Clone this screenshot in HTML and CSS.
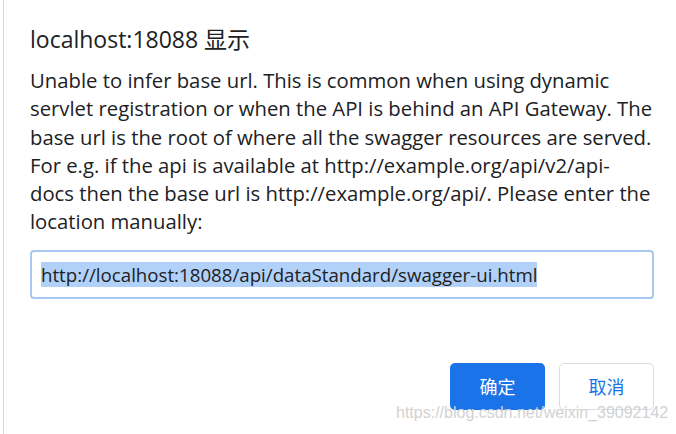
FILE: index.html
```html
<!DOCTYPE html>
<html>
<head>
<meta charset="utf-8">
<link rel="stylesheet" href="styles.css">
</head>
<body>
<div class="frame">
  <div class="dialog">
    <h1 class="title">localhost:18088 显示</h1>
    <p class="message">Unable to infer base url. This is common when using dynamic servlet registration or when the API is behind an API Gateway. The base url is the root of where all the swagger resources are served. For e.g. if the api is available at http://example.org/api/v2/api-<br>docs then the base url is http://example.org/api/. Please enter the location manually:</p>
    <div class="input"><span class="sel">http://localhost:18088/api/dataStandard/swagger-ui.html</span></div>
    <div class="actions">
      <button class="btn primary">确定</button>
      <button class="btn secondary">取消</button>
    </div>
  </div>
  <div class="watermark">https://blog.csdn.net/weixin_39092142</div>
</div>
</body>
</html>
```
FILE: styles.css
```css
html, body {
  margin: 0;
  padding: 0;
  background: #fff;
}
.frame {
  position: relative;
  width: 673px;
  height: 434px;
  box-sizing: border-box;
  margin-left: 3px;
  border-left: 1px solid #d8d8d8;
  overflow: hidden;
}
.dialog {
  padding: 23px 0 0 26px;
  font-family: "Open Sans", "Noto Sans CJK SC", sans-serif;
  color: #202124;
}
.title {
  margin: 0;
  font-size: 23px;
  font-weight: 400;
  line-height: 32px;
}
.message {
  margin: 11px 0 0 0;
  font-size: 20.3px;
  line-height: 28.3px;
  width: 628px;
}
.input {
  margin-top: 14px;
  width: 624px;
  height: 49px;
  box-sizing: border-box;
  border: 2px solid #a8c7f1;
  border-radius: 4px;
  display: flex;
  align-items: center;
  padding-left: 9px;
  font-size: 18.7px;
}
.sel {
  background: #b1d1f9;
}
.actions {
  display: flex;
  justify-content: flex-end;
  gap: 14px;
  margin-top: 64px;
  width: 624px;
}
.btn {
  width: 95px;
  height: 47px;
  border-radius: 5px;
  font-family: "Noto Sans CJK SC", sans-serif;
  font-size: 18px;
  cursor: pointer;
}
.primary {
  background: #1a73e8;
  color: #fff;
  border: none;
}
.secondary {
  background: #fff;
  color: #1a73e8;
  border: 1px solid #dadce0;
}
.watermark {
  position: absolute;
  left: 392px;
  top: 404px;
  font-family: "Liberation Sans", Arial, sans-serif;
  font-size: 16px;
  color: #d2d2d2;
}
```
